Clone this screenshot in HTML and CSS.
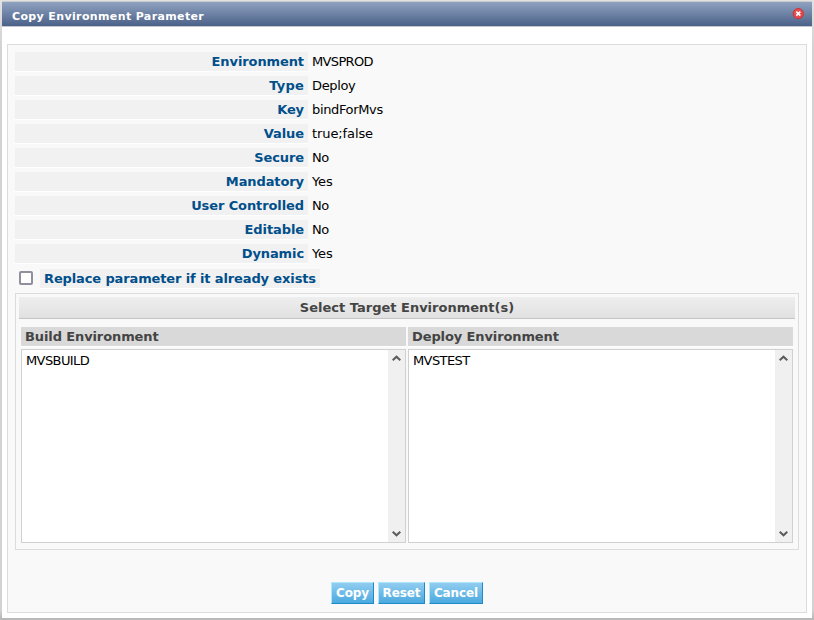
FILE: index.html
```html
<!DOCTYPE html>
<html lang="en">
<head>
<meta charset="utf-8">
<title>Copy Environment Parameter</title>
<link rel="stylesheet" href="styles.css">
</head>
<body>
<main class="dialog">
  <header class="titlebar">
    <h1>Copy Environment Parameter</h1>
    <svg class="close" width="12" height="12" viewBox="0 0 12 12"><circle cx="6.3" cy="5.6" r="5.1" fill="#e84b4b" stroke="#c8323a" stroke-width="1"/><path d="M4.3 3.6l4 4M8.3 3.6l-4 4" stroke="#fff" stroke-width="1.6"/></svg>
  </header>
  <section class="panel">
    <dl class="props">
      <dt>Environment</dt><dd class="caps">MVSPROD</dd>
      <dt class="wide">Type</dt><dd>Deploy</dd>
      <dt>Key</dt><dd>bindForMvs</dd>
      <dt>Value</dt><dd class="loose">true;false</dd>
      <dt>Secure</dt><dd>No</dd>
      <dt>Mandatory</dt><dd class="loose">Yes</dd>
      <dt>User Controlled</dt><dd>No</dd>
      <dt>Editable</dt><dd>No</dd>
      <dt>Dynamic</dt><dd class="loose">Yes</dd>
    </dl>
    <label class="replace"><input type="checkbox"><span>Replace parameter if it already exists</span></label>
    <section class="targets">
      <h2>Select Target Environment(s)</h2>
      <div class="columns">
        <div class="column">
          <h3>Build Environment</h3>
          <div class="list">
            <span class="item">MVSBUILD</span>
            <div class="scroll">
              <svg width="9" height="7" viewBox="0 0 9 7"><path d="M.7 5.3L4.5 1.7l3.8 3.6"/></svg>
              <svg width="9" height="7" viewBox="0 0 9 7"><path d="M.7 1.7l3.8 3.6 3.8-3.6"/></svg>
            </div>
          </div>
        </div>
        <div class="column">
          <h3>Deploy Environment</h3>
          <div class="list">
            <span class="item">MVSTEST</span>
            <div class="scroll">
              <svg width="9" height="7" viewBox="0 0 9 7"><path d="M.7 5.3L4.5 1.7l3.8 3.6"/></svg>
              <svg width="9" height="7" viewBox="0 0 9 7"><path d="M.7 1.7l3.8 3.6 3.8-3.6"/></svg>
            </div>
          </div>
        </div>
      </div>
    </section>
    <div class="actions">
      <button class="copy">Copy</button><button class="reset">Reset</button><button class="cancel">Cancel</button>
    </div>
  </section>
</main>
</body>
</html>
```
FILE: styles.css
```css
* { box-sizing: border-box; margin: 0; padding: 0; }
body {
  width: 814px;
  height: 620px;
  padding: 1px 2px 2px;
  overflow: hidden;
  background: linear-gradient(#e2e2e2, #d2d2d2 50px, #d2d2d2 610px, #b9b9b9 618px);
  font: 13px/19px Verdana, "DejaVu Sans", sans-serif;
  color: #000;
}
h1, h2, h3 { font-size: 13px; font-weight: bold; }
.dialog {
  height: 617px;
  background: #fff;
  border-top: 1px solid #ccc;
}
.titlebar {
  display: flex;
  justify-content: space-between;
  height: 25px;
  padding: 0 8px 0 10px;
  background: linear-gradient(#8fa2c0, #4c6189);
  border-bottom: 1px solid #c4c8ce;
}
.titlebar h1 { color: #fff; font-size: 11px; line-height: 29px; letter-spacing: .37px; }
.close { margin-top: 6px; }
.panel {
  height: 569px;
  margin: 17px 5px 0;
  padding: 7px;
  background: #f9f9f9;
  border: 1px solid #dcdcdc;
}
.props {
  display: grid;
  grid-template-columns: 293px 1fr;
  grid-auto-rows: 20px;
  row-gap: 4px;
  column-gap: 4px;
}
dt {
  padding-right: 4px;
  background: #f1f1f1;
  border-bottom: 1px solid #fff;
  color: #004f8b;
  font-weight: bold;
  letter-spacing: -.1px;
  text-align: right;
}
dt.wide { letter-spacing: .2px; }
dd { letter-spacing: -.35px; }
dd.caps { letter-spacing: -.65px; }
dd.loose { letter-spacing: -.1px; }
.replace { display: flex; height: 20px; margin-top: 5px; padding-left: 4px; }
.replace input {
  appearance: none;
  width: 14px;
  height: 14px;
  margin: 2px 7px 0 0;
  background: #fff;
  border: 2px solid #8f8f9d;
  border-radius: 2px;
}
.replace span {
  padding: 0 4px;
  background: #f1f1f1;
  border-bottom: 1px solid #fff;
  color: #004f8b;
  font-weight: bold;
  letter-spacing: -.125px;
}
.targets {
  width: 784px;
  height: 257px;
  margin-top: 4px;
  padding: 3px;
  border: 1px solid #dcdcdc;
}
.targets h2 {
  height: 22px;
  background: linear-gradient(#eee, #e1e1e1);
  border-bottom: 1px solid #c4c4c4;
  color: #444;
  line-height: 21px;
  text-align: center;
}
.columns { display: flex; gap: 2px; padding: 8px 2px 0; }
.column { width: 385px; }
.column h3 {
  height: 20px;
  padding-left: 4px;
  background: #d9d9d9;
  border-bottom: 1px solid #fff;
  color: #444;
  letter-spacing: -.11px;
}
.list {
  display: flex;
  justify-content: space-between;
  height: 194px;
  margin-top: 2px;
  background: #fff;
  border: 1px solid #d0d0d0;
}
.item { padding: 1px 4px; letter-spacing: -.6px; }
.scroll {
  display: flex;
  flex-direction: column;
  align-items: center;
  justify-content: space-between;
  width: 17px;
  padding: 5px 0;
  background: #f0f0f0;
}
.scroll path { fill: none; stroke: #5c5c5c; stroke-width: 2; }
.actions { display: flex; justify-content: center; gap: 4px; margin-top: 32px; }
button {
  height: 22px;
  background: linear-gradient(#91cdf0, #4ba9df);
  border: 1px solid;
  border-color: #aee6fb #2089c9 #2089c9 #aee6fb;
  color: #fff;
  font: bold 12px/19px Verdana, "DejaVu Sans", sans-serif;
  letter-spacing: -.1px;
}
.copy { width: 43px; }
.reset { width: 47px; }
.cancel { width: 54px; }
```
